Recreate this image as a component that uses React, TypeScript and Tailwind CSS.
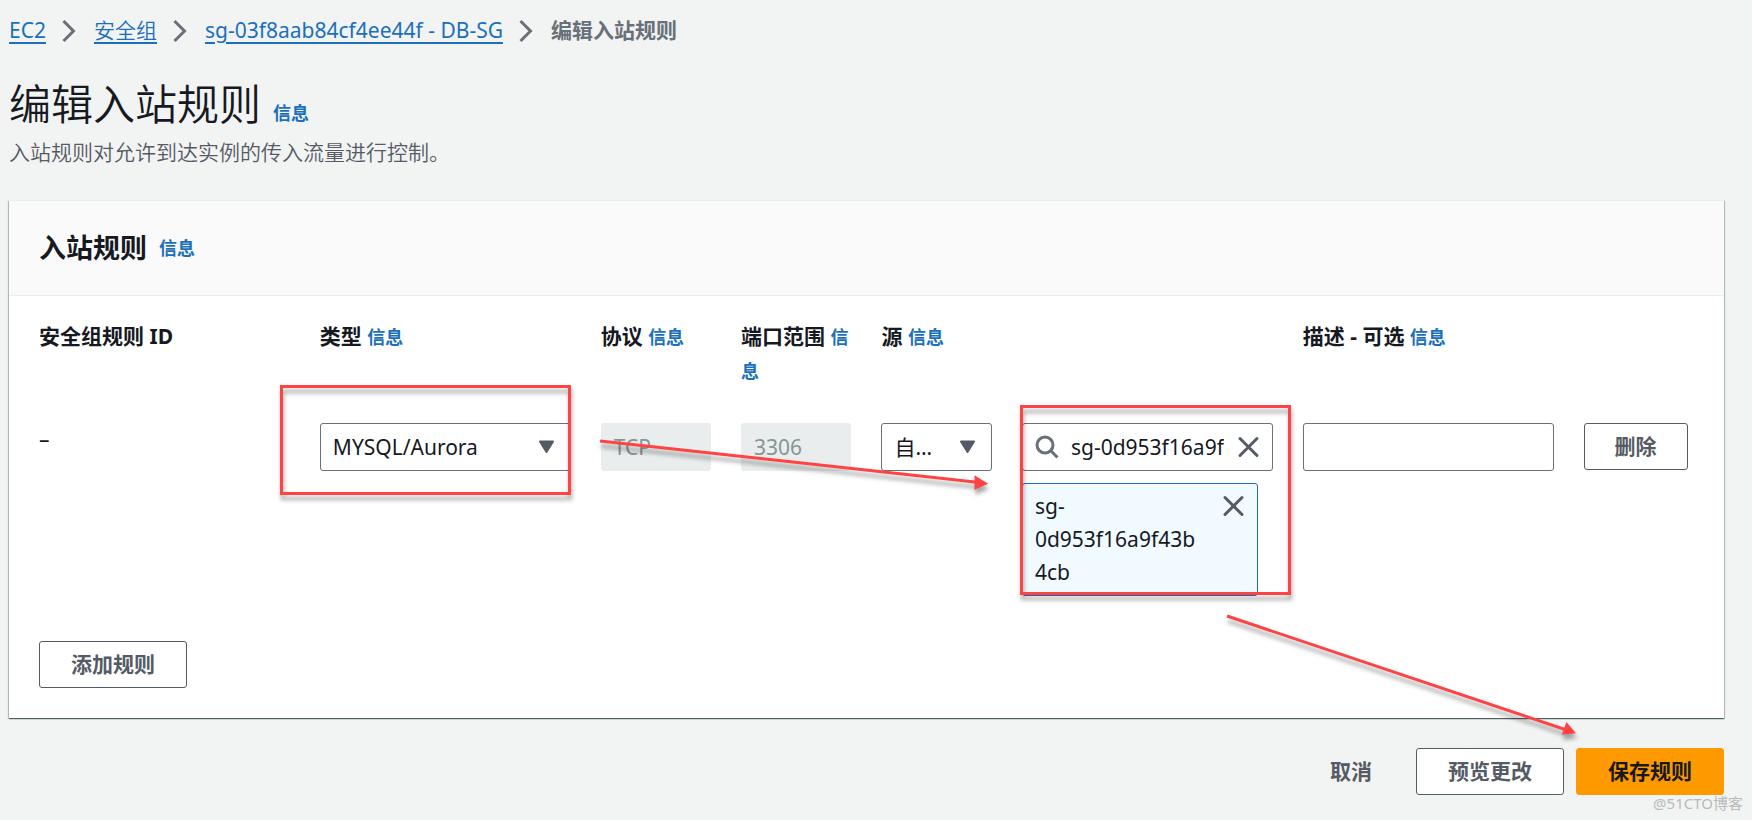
import React, { useState } from 'react';

const linkClass = 'text-[#1a70bc] underline underline-offset-[4px] decoration-[2px]';
const buttonClass = 'rounded-[3px] border border-[#545b64] bg-white py-[6px] font-bold text-[#545b64]';
const fieldClass = 'h-12 w-full rounded-[3px] border border-[#687078] bg-white';

function Info() {
  return (
    <a href="#info" className="text-lg leading-[33px] font-bold text-[#1a70bc]">
      信息
    </a>
  );
}

function Separator() {
  return (
    <svg className="mx-4 h-6 w-4 shrink-0" viewBox="0 0 16 24" fill="none" stroke="#687078" strokeWidth="3">
      <path d="M1.5 2 L11.5 12 L1.5 22" />
    </svg>
  );
}

function CloseIcon() {
  return (
    <svg className="size-6" viewBox="0 0 24 24" fill="none" stroke="#545b64" strokeWidth="3" strokeLinecap="round">
      <path d="M4 3.5 L21 20.5 M21 3.5 L4 20.5" />
    </svg>
  );
}

function SearchIcon() {
  return (
    <svg className="size-6 shrink-0" viewBox="0 0 24 24" fill="none" stroke="#687078" strokeWidth="3">
      <circle cx="10" cy="10" r="8" />
      <path d="M15.5 15.5 L22.5 22.5" />
    </svg>
  );
}

type SelectProps = {
  id: string;
  value: string;
  options: string[];
  onChange: (value: string) => void;
};

function Select({ id, value, options, onChange }: SelectProps) {
  return (
    <div className="relative">
      <select
        id={id}
        value={value}
        onChange={(e) => onChange(e.target.value)}
        className="h-12 w-full appearance-none overflow-hidden rounded-[3px] border border-[#687078] bg-white pr-12 pl-3 text-ellipsis whitespace-nowrap"
      >
        {options.map((option) => (
          <option key={option}>{option}</option>
        ))}
      </select>
      <svg className="pointer-events-none absolute top-[17px] right-4 h-[14px] w-4" viewBox="0 0 16 14">
        <path d="M1 1.5 H14 L7.5 12 Z" fill="#545b64" stroke="#545b64" strokeWidth="2" strokeLinejoin="round" />
      </svg>
    </div>
  );
}

// Highlight boxes and arrows drawn over the form
function Annotations() {
  return (
    <svg
      className="pointer-events-none absolute top-0 left-0 h-[820px] w-[1752px] drop-shadow-[1px_5px_2px_rgba(0,0,0,0.35)]"
      viewBox="0 0 1752 820"
      fill="none"
      stroke="#ff4343"
      strokeWidth="3"
    >
      <rect x="281.5" y="386.5" width="288" height="107" />
      <rect x="1021.5" y="406.5" width="268" height="187" />
      <path d="M600 441 L984 483" />
      <path d="M976 478 L985 483.5 L976 487.5 Z" fill="#ff4343" />
      <path d="M1227 616 L1571 731.5" />
      <path d="M1567 725 L1573 732 L1564 733 Z" fill="#ff4343" />
    </svg>
  );
}

export default function App() {
  const [type, setType] = useState('MYSQL/Aurora');
  const [source, setSource] = useState('自定义');
  const [search, setSearch] = useState('sg-0d953f16a9f43b4cb');
  const [groups, setGroups] = useState(['sg-0d953f16a9f43b4cb']);
  const [description, setDescription] = useState('');

  return (
    <div className="relative min-h-screen overflow-hidden bg-[#f2f3f3] pt-[14px] pr-7 pb-6 pl-[9px] font-['Noto_Sans','Noto_Sans_CJK_SC',sans-serif] text-[21px] leading-[33px] text-[#16191f]">
      <nav className="flex items-center">
        <a href="#ec2" className={linkClass}>EC2</a>
        <Separator />
        <a href="#groups" className={`${linkClass} font-[350]`}>安全组</a>
        <Separator />
        <a href="#group" className={linkClass}>sg-03f8aab84cf4ee44f - DB-SG</a>
        <Separator />
        <span className="font-bold text-[#687078]">编辑入站规则</span>
      </nav>

      <header className="mt-[30px]">
        <div className="flex items-baseline gap-3">
          <h1 className="text-[42px] leading-[54px] font-[350]">编辑入站规则</h1>
          <Info />
        </div>
        <p className="mt-[5px] font-[350] text-[#545b64]">入站规则对允许到达实例的传入流量进行控制。</p>
      </header>

      <main>
        <section className="mt-[31px] border-t border-[#eaeded] bg-white shadow-[0_1px_1px_rgba(0,28,36,0.5),1px_1px_1px_rgba(0,28,36,0.2),-1px_1px_1px_rgba(0,28,36,0.2)]">
          <div className="flex items-center gap-3 border-b border-[#eaeded] bg-[#fafafa] px-[30px] py-[30px]">
            <h2 className="text-[27px] leading-[34px] font-bold">入站规则</h2>
            <Info />
          </div>

          <div className="px-[30px] pt-6 pb-[30px]">
            <div className="grid grid-cols-12 gap-x-[30px] font-bold">
              <div className="col-span-2">安全组规则 ID</div>
              <div className="col-span-2"><label htmlFor="type">类型</label> <Info /></div>
              <div><label htmlFor="protocol">协议</label> <Info /></div>
              <div><label htmlFor="port">端口范围</label> <Info /></div>
              <div className="col-span-3"><label htmlFor="source">源</label> <Info /></div>
              <div className="col-span-3"><label htmlFor="description">描述 - 可选</label> <Info /></div>
            </div>

            <div className="mt-[35px] grid grid-cols-12 items-start gap-x-[30px]">
              <div className="col-span-2">–</div>
              <div className="col-span-2">
                <Select id="type" value={type} options={['MYSQL/Aurora', 'SSH', 'HTTP', 'HTTPS']} onChange={setType} />
              </div>
              <input id="protocol" disabled value="TCP" className="h-12 w-full rounded-[3px] bg-[#eaeded] px-[13px] text-[#879596]" />
              <input id="port" disabled value="3306" className="h-12 w-full rounded-[3px] bg-[#eaeded] px-[13px] text-[#879596]" />
              <Select id="source" value={source} options={['自定义', '我的 IP']} onChange={setSource} />
              <div className="col-span-2">
                <div className={`${fieldClass} flex items-center gap-3 px-3`}>
                  <SearchIcon />
                  <input
                    aria-label="搜索源"
                    value={search}
                    onChange={(e) => setSearch(e.target.value)}
                    className="w-0 min-w-0 flex-1 outline-none"
                  />
                  <button type="button" aria-label="清除" onClick={() => setSearch('')}>
                    <CloseIcon />
                  </button>
                </div>
                {groups.map((group) => (
                  <div key={group} className="mt-3 mr-[15px] flex items-start justify-between rounded-[3px] border border-[#1a70bc] bg-[#f1faff] px-3 py-[6px]">
                    <span className="w-[170px] break-words">{group}</span>
                    <button type="button" aria-label="移除" className="mt-1" onClick={() => setGroups([])}>
                      <CloseIcon />
                    </button>
                  </div>
                ))}
              </div>
              <input
                id="description"
                value={description}
                onChange={(e) => setDescription(e.target.value)}
                className={`${fieldClass} col-span-2 px-3`}
              />
              <button type="button" className={`${buttonClass} justify-self-start px-[30px] whitespace-nowrap`}>删除</button>
            </div>

            <button type="button" className={`${buttonClass} mt-[45px] px-[31px]`}>添加规则</button>
          </div>
        </section>

        <div className="mt-[30px] flex justify-end gap-3">
          <button type="button" className="px-8 py-[6px] font-bold text-[#545b64]">取消</button>
          <button type="button" className={`${buttonClass} px-[31px]`}>预览更改</button>
          <button type="button" className="rounded-[3px] border border-[#ff9900] bg-[#ff9900] px-[31px] py-[6px] font-bold">
            保存规则
          </button>
        </div>
      </main>

      <Annotations />
      <span className="absolute right-[9px] bottom-[6px] text-[15px] leading-[22px] text-[#b8babb]">@51CTO博客</span>
    </div>
  );
}
